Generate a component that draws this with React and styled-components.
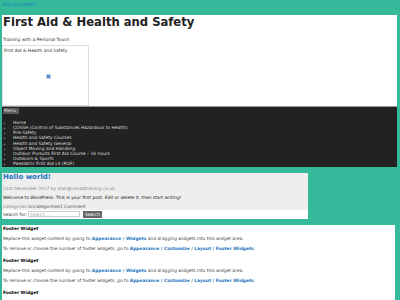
import React from 'react'
import styled, { createGlobalStyle } from 'styled-components'

const Global = createGlobalStyle`
  html, body {
    margin: 0;
    padding: 0;
    background: #34b99b;
  }
  body {
    font-family: "DejaVu Sans", sans-serif;
    font-size: 4.4px;
    line-height: normal;
    color: #222;
  }
`

const Page = styled.div`
  padding: 0 3px 0 2px;
  height: 300px;
  overflow: hidden;
`

const SkipLink = styled.a`
  display: block;
  height: 15px;
  padding: 1.6px 0 0 0;
  box-sizing: border-box;
  color: #1e73be;
  text-decoration: none;
`

const Header = styled.header`
  background: #fff;
  height: 91px;
  padding-left: 1px;
  box-sizing: border-box;
  overflow: hidden;
`

const Title = styled.h1`
  margin: 0;
  font-size: 11.6px;
  font-weight: bold;
  color: #222;
`

const Tagline = styled.p`
  margin: 8px 0 3.4px;
  color: #333;
`

const LogoBox = styled.div`
  position: relative;
  width: 87px;
  height: 61px;
  border: 1px solid #ddd;
  box-sizing: border-box;
  margin-left: -1px;
  padding: 2px 1px;
  color: #333;
`

const BrokenIcon = styled.svg`
  position: absolute;
  left: 43px;
  top: 28px;
`

const Nav = styled.nav`
  background: #222;
  border-top: 1px solid #999;
  height: 61px;
  box-sizing: border-box;
  overflow: hidden;
  padding: 1px 1px 0;
`

const MenuButton = styled.button`
  display: block;
  font: inherit;
  background: #5a5a5a;
  color: #ddd;
  border: none;
  height: 6px;
  width: 16px;
  padding: 0 1px;
  text-align: left;
  line-height: 6px;
`

const MenuList = styled.ul`
  margin: 6px 0 0;
  padding-left: 10px;
  list-style: circle;
  color: #ddd;
`

const MenuItem = styled.li`
  line-height: 5.15px;
  &::marker {
    color: #777;
  }
`

const Post = styled.article`
  margin-top: 6px;
  width: 306px;
  background: #eee;
  padding-left: 1px;
  box-sizing: border-box;
`

const PostTitle = styled.h2`
  margin: 0;
  font-size: 7px;
  font-weight: bold;
  color: #1e73be;
`

const Meta = styled.p`
  margin: 4.5px 0 0;
  color: #888;
`

const Body = styled.p`
  margin: 4px 0 0;
  color: #222;
`

const Cats = styled.p`
  margin: 4.9px 0 0;
  color: #888;
  height: 5.5px;
  span { color: #555; }
`

const SearchRow = styled.form`
  display: flex;
  align-items: center;
  gap: 1px;
  background: #fff;
  height: 9px;
  margin-left: -1px;
  padding-left: 1px;
  color: #333;
`

const SearchInput = styled.input`
  font: inherit;
  width: 52px;
  height: 6px;
  box-sizing: border-box;
  border: 1px solid #ccc;
  padding: 0 1px;
  margin: 0;
  color: #999;
  &::placeholder { color: #aaa; }
`

const SearchButton = styled.button`
  font: inherit;
  height: 7px;
  width: 19px;
  margin-left: 2px;
  padding: 0;
  border: none;
  background: #666;
  color: #fff;
`

const Footer = styled.footer`
  margin-top: 6px;
  background: #fff;
  margin-right: 2px;
  padding: 0.8px 1px 4px;
`

const Widget = styled.section`
  padding-bottom: 2px;
`

const WidgetTitle = styled.h3`
  margin: 0 0 5px;
  font-size: 4.4px;
  font-weight: bold;
  color: #000;
`

const WidgetText = styled.p`
  margin: 0 0 5px;
  color: #444;
  a {
    color: #1e73be;
    font-weight: bold;
    text-decoration: none;
  }
`

const menu = [
  'Home',
  'COSSH (Control of Substances Hazardous to Health)',
  'Fire Safety',
  'Health and Safety Courses',
  'Health and Safety General',
  'Object Moving and Handling',
  'Outdoor Pursuits First Aid Course – 16 hours',
  'Outdoors & Sports',
  'Paediatric First Aid L3 (RQF)',
]

const FooterWidget = () => (
  <Widget>
    <WidgetTitle>Footer Widget</WidgetTitle>
    <WidgetText>
      Replace this widget content by going to <a href="#">Appearance / Widgets</a> and dragging widgets into this widget area.
    </WidgetText>
    <WidgetText>
      To remove or choose the number of footer widgets, go to <a href="#">Appearance / Customize / Layout / Footer Widgets</a>.
    </WidgetText>
  </Widget>
)

export default function App() {
  return (
    <Page>
      <Global />
      <SkipLink href="#">Skip to content</SkipLink>
      <Header>
        <Title>First Aid &amp; Health and Safety</Title>
        <Tagline>Training with a Personal Touch</Tagline>
        <LogoBox>
          First Aid &amp; Health and Safety
          <BrokenIcon width="5" height="5" viewBox="0 0 5 5">
            <rect x="0" y="0" width="5" height="5" fill="#d8e6f5" stroke="#7a9cc6" strokeWidth="0.6" />
            <rect x="1" y="1.2" width="3" height="2.6" fill="#4a86d0" />
          </BrokenIcon>
        </LogoBox>
      </Header>
      <Nav>
        <MenuButton type="button">Menu</MenuButton>
        <MenuList>
          {menu.map((m) => (
            <MenuItem key={m}>{m}</MenuItem>
          ))}
        </MenuList>
      </Nav>
      <Post>
        <PostTitle>Hello world!</PostTitle>
        <Meta>21st December 2017 by alan@candatraining.co.uk</Meta>
        <Body>Welcome to WordPress. This is your first post. Edit or delete it, then start writing!</Body>
        <Cats>Categories <span>Uncategorized1 Comment</span></Cats>
        <SearchRow onSubmit={(e) => e.preventDefault()}>
          <label>Search for:</label>
          <SearchInput placeholder="Search …" />
          <SearchButton type="submit">Search</SearchButton>
        </SearchRow>
      </Post>
      <Footer>
        <FooterWidget />
        <FooterWidget />
        <FooterWidget />
      </Footer>
    </Page>
  )
}
